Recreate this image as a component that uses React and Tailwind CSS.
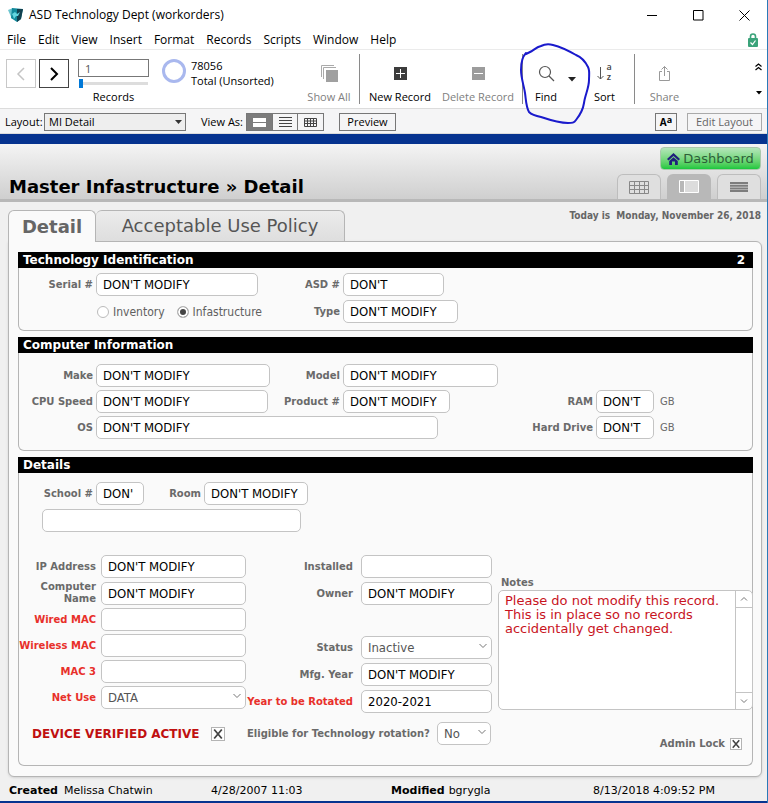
import React from "react";

const input =
  "h-[23px] shrink-0 rounded-[5px] border border-[#c4c4c4] bg-white px-1.5 text-[13px] text-black outline-none font-['DejaVu_Sans_Condensed','DejaVu_Sans',sans-serif]";
const labelGray = "text-right text-[10px] leading-3 font-bold text-[#6a6a6a]";
const labelRed = "text-right text-[10px] leading-3 font-bold whitespace-nowrap text-[#e8302a]";

function Field({ id, label, value = "", width, labelWidth = "w-[74px]", gap = "gap-[3px]", red, unit, span = "" }) {
  return (
    <div className={`flex items-center ${gap} ${span}`}>
      <label htmlFor={id} className={`shrink-0 ${labelWidth} ${red ? labelRed : labelGray}`}>
        {label}
      </label>
      <input id={id} type="text" defaultValue={value} className={`${input} ${width}`} />
      {unit && <span className="ml-[3px] text-[10px] text-[#6a6a6a]">{unit}</span>}
    </div>
  );
}

function Picker({ id, options, width }) {
  return (
    <div className={`relative shrink-0 ${width}`}>
      <select
        id={id}
        className="block h-[23px] w-full appearance-none rounded-[5px] border border-[#c4c4c4] bg-white px-1.5 text-[13px] text-[#555] outline-none font-['DejaVu_Sans_Condensed','DejaVu_Sans',sans-serif]"
      >
        {options.map((o) => (
          <option key={o}>{o}</option>
        ))}
      </select>
      <svg className="pointer-events-none absolute top-1.5 right-1 h-2 w-2.5" viewBox="0 0 10 8" fill="none" stroke="#777">
        <path d="M1.5 2 5 5.5 8.5 2" />
      </svg>
    </div>
  );
}

function CrossBox({ id, size }) {
  return (
    <span className={`relative inline-block shrink-0 ${size}`}>
      <input id={id} type="checkbox" defaultChecked className="peer block h-full w-full appearance-none border border-[#b4b4b4] bg-white" />
      <svg className="pointer-events-none absolute inset-0 hidden h-full w-full peer-checked:block" viewBox="0 0 14 14" stroke="#444" strokeWidth="1.8">
        <path d="M3.2 2.5 10.8 11.5M10.8 2.5 3.2 11.5" />
      </svg>
    </span>
  );
}

function Radio({ id, label, checked }) {
  return (
    <span className="flex items-center gap-1">
      <input
        id={id}
        type="radio"
        name="kind"
        defaultChecked={checked}
        className="h-3 w-3 appearance-none rounded-full border border-[#bbb] bg-white checked:bg-[#444] checked:shadow-[inset_0_0_0_2px_white]"
      />
      <label htmlFor={id} className="text-xs text-[#606060] font-['DejaVu_Sans_Condensed','DejaVu_Sans',sans-serif]">
        {label}
      </label>
    </span>
  );
}

function Section({ title, badge, bodyClass, children }) {
  return (
    <section>
      <h2 className="flex h-4 items-center justify-between bg-black pr-2 pl-[5px] text-xs leading-4 font-bold text-white">
        <span>{title}</span>
        <span>{badge}</span>
      </h2>
      <div className={`rounded-b-md border border-t-0 border-[#b5b5b5] ${bodyClass}`}>{children}</div>
    </section>
  );
}

function Tool({ label, width, disabled, children }) {
  return (
    <button type="button" disabled={disabled} className={`flex h-full shrink-0 flex-col items-center pt-[11px] text-[11px] leading-4 ${width} ${disabled ? "text-[#808080]" : "text-black"}`}>
      <span className="flex h-6 items-center">{children}</span>
      <span className="mt-1 whitespace-nowrap">{label}</span>
    </button>
  );
}

const Divider = () => <div className="mx-[3px] h-[50px] w-px shrink-0 bg-[#8a8a8a]" />;

function TitleBar() {
  return (
    <header className="flex h-[30px] items-center pl-2 text-xs">
      <svg className="h-4 w-4" viewBox="0 0 16 16">
        <path d="M0 3 5 1v10l-1 1z" fill="#6cc5cf" />
        <path d="M4 1 15 2l-2 10-4 3-6-4z" fill="#11899b" />
        <path d="m9 2 6 0-2 10-4 3z" fill="#12404f" />
        <path d="m4 7 3-2 2 2 3-2-2 4-2 0-2 3-1-3z" fill="#63d5df" />
      </svg>
      <span className="ml-[5px]">ASD Technology Dept (workorders)</span>
      <div className="ml-auto flex">
        <button type="button" aria-label="Minimize" className="flex h-7 w-[46px] items-center justify-center">
          <svg width="11" height="11" stroke="#000" fill="none"><path d="M0 5.5h10" /></svg>
        </button>
        <button type="button" aria-label="Maximize" className="flex h-7 w-[46px] items-center justify-center">
          <svg width="11" height="11" stroke="#000" fill="none"><path d="M.5 .5h9.500v9.500h-9.500z" /></svg>
        </button>
        <button type="button" aria-label="Close" className="flex h-7 w-[46px] items-center justify-center">
          <svg width="11" height="11" stroke="#000" fill="none"><path d="m.5 .5 10 10m0-10-10 10" /></svg>
        </button>
      </div>
    </header>
  );
}

function MenuBar() {
  return (
    <nav className="flex h-5 items-center gap-3 border-b border-[#ebebeb] pr-[9px] pl-[7px] text-xs">
      {["File", "Edit", "View", "Insert", "Format", "Records", "Scripts", "Window", "Help"].map((m) => (
        <button key={m} type="button">{m}</button>
      ))}
      <svg className="ml-auto" width="10" height="14" viewBox="0 0 10 14">
        <path d="M2.500 6V3.500a2.500 2.500 0 0 1 5 0V6" fill="none" stroke="#3ba37a" strokeWidth="1.600" />
        <rect y="5" width="10" height="9" rx="1" fill="#3ba37a" />
        <path d="m2.500 9.500 2 2 3-4" fill="none" stroke="#fff" strokeWidth="1.200" />
      </svg>
    </nav>
  );
}

function Toolbar() {
  return (
    <div className="relative flex h-[58px] items-center pl-1.5">
      <div className="flex gap-[3px] self-start pt-[9px]">
        <button type="button" aria-label="Previous record" disabled className="flex h-[29px] w-[30px] items-center justify-center border border-[#c8c8c8]">
          <svg width="10" height="14" fill="none" stroke="#c4c4c4" strokeWidth="1.500"><path d="M8 1 2 7l6 6" /></svg>
        </button>
        <button type="button" aria-label="Next record" className="flex h-[29px] w-[30px] items-center justify-center border border-[#444]">
          <svg width="10" height="14" fill="none" stroke="#000" strokeWidth="2"><path d="m2 1 6 6-6 6" /></svg>
        </button>
      </div>
      <div className="ml-[9px] flex w-[71px] shrink-0 flex-col self-start pt-[9px]">
        <input aria-label="Record number" defaultValue="1" className="h-[18px] w-full border border-[#777] px-1.5 text-[11px] text-[#555] outline-none" />
        <input
          type="range"
          aria-label="Record position"
          defaultValue="0"
          className="mt-0.5 ml-px h-[9px] w-[69px] appearance-none bg-[linear-gradient(#ddd,#ddd)] bg-[length:100%_3px] bg-center bg-no-repeat [&::-webkit-slider-thumb]:h-[9px] [&::-webkit-slider-thumb]:w-1 [&::-webkit-slider-thumb]:appearance-none [&::-webkit-slider-thumb]:bg-[#0078d7]"
        />
        <span className="mt-px text-center text-[11px] leading-4">Records</span>
      </div>
      <div className="mt-[9px] ml-[13px] h-6 w-6 shrink-0 self-start rounded-full border-[3px] border-[#a9b8ee]" />
      <div className="ml-[5px] w-[111px] shrink-0 self-start pt-2 text-[11px] leading-[15px]">
        <div>78056</div>
        <div>Total (Unsorted)</div>
      </div>
      <Tool label="Show All" width="w-[54px]" disabled>
        <svg width="17" height="17" fill="none" stroke="#aaa">
          <path d="M.5 12V.5H13M2.500 14V2.500H15" />
          <path d="M5 5h12v12H5z" fill="#a0a0a0" stroke="none" />
        </svg>
      </Tool>
      <Divider />
      <Tool label="New Record" width="w-[74px]">
        <svg width="13" height="13"><path d="M0 0h13v13H0z" fill="#3c3c3c" /><path d="M6.500 2v9M2 6.500h9" stroke="#fff" /></svg>
      </Tool>
      <Tool label="Delete Record" width="w-[82px]" disabled>
        <svg width="13" height="13"><path d="M0 0h13v13H0z" fill="#9c9c9c" /><path d="M2 6.500h9" stroke="#fff" /></svg>
      </Tool>
      <Divider />
      <Tool label="Find" width="w-10">
        <svg width="17" height="17" fill="none" stroke="#555" strokeWidth="1.200"><circle cx="7" cy="7" r="5.500" /><path d="m11 11 5 5" /></svg>
      </Tool>
      <button type="button" aria-label="Find options" className="flex w-3 justify-center">
        <svg width="8" height="5"><path d="M0 0h8L4 4.500z" fill="#222" /></svg>
      </button>
      <Tool label="Sort" width="w-[53px]">
        <span className="flex items-center gap-0.5">
          <svg width="7" height="16" fill="none" stroke="#555"><path d="M3.500 2v12M.5 11l3 3 3-3" /></svg>
          <span className="flex flex-col pb-0.5 text-[9px] leading-[10px] font-semibold text-[#444]">
            <span>a</span>
            <span>z</span>
          </span>
        </span>
      </Tool>
      <Divider />
      <Tool label="Share" width="w-[53px]" disabled>
        <svg width="13" height="17" fill="none" stroke="#999"><path d="M4 6.500H1.500v9h10v-9H9M6.500 11V1.500M3.500 4.500l3-3 3 3" /></svg>
      </Tool>
      <div className="mr-[5px] ml-auto flex flex-col items-center gap-5">
        <svg width="7" height="8" fill="none" stroke="#000" strokeWidth="1.200"><path d="m.5 3.500 3-2.500 3 2.500M.5 7l3-2.500 3 2.500" /></svg>
        <svg width="6" height="4"><path d="M0 0h6L3 3.500z" /></svg>
      </div>
      <svg className="pointer-events-none absolute -top-2 left-[518px] z-10" width="74" height="84" viewBox="518 42 74 84" fill="none" stroke="#1a1acc" strokeWidth="2" strokeLinecap="round" strokeLinejoin="round">
        <path d="M526 53C522 57 521 64 521 70c0 8 3 16 4 23 1 7 1 14 4 19 3 3 7 4 12 5 9 3 18 6 27 6 4 0 6 0 8-3 4-5 7-10 8-17 1-8 5-15 5-23 0-5 1-9-1-13-3-6-7-10-12-12-7-4-15-8-23-10-4-1-8-1-12 1-4 1-6 3-9 5l-6 3" />
      </svg>
    </div>
  );
}

function LayoutBar() {
  return (
    <div className="flex h-[26px] items-center border-t border-b border-[#dcdcdc] bg-[#f5f5f6] pt-0.5 pr-[5px] pl-[5px] text-[11px]">
      <label htmlFor="layout" className="w-[39px] shrink-0">Layout:</label>
      <div className="relative w-[142px] shrink-0">
        <select id="layout" className="block h-[18px] w-full appearance-none border border-[#777] bg-[#eee] pl-1 leading-4 outline-none">
          <option>MI Detail</option>
        </select>
        <svg className="pointer-events-none absolute top-[7px] right-1" width="7" height="4"><path d="M0 0h7L3.500 4z" fill="#333" /></svg>
      </div>
      <span className="ml-[15px] w-[45px] shrink-0 whitespace-nowrap">View As:</span>
      <div className="flex h-[18px] border border-[#777]">
        <button type="button" aria-label="Form view" className="flex w-[25px] items-center justify-center bg-[#7c7c7c]">
          <svg width="13" height="9" fill="#fff"><path d="M0 0h13v4H0zM0 5h13v4H0z" /></svg>
        </button>
        <button type="button" aria-label="List view" className="flex w-[26px] items-center justify-center border-x border-[#777]">
          <svg width="13" height="10" stroke="#444"><path d="M0 .5h13M0 3.500h13M0 6.500h13M0 9.500h13" /></svg>
        </button>
        <button type="button" aria-label="Table view" className="flex w-[25px] items-center justify-center">
          <svg width="13" height="9" stroke="#444" fill="none"><path d="M.5 .5h12v8H.5zM0 3h13M0 5.500h13M3.500 0v9M6.500 0v9M9.500 0v9" /></svg>
        </button>
      </div>
      <button type="button" className="ml-[15px] h-[18px] w-[57px] border border-[#777] leading-4">Preview</button>
      <button type="button" aria-label="Formatting" className="ml-auto flex h-[18px] w-[22px] items-start justify-center border border-[#777] leading-4 font-bold">
        <span className="text-[10px]">A</span>
        <span className="text-[9px] leading-3">a</span>
      </button>
      <button type="button" className="ml-2.5 h-[18px] w-[75px] border border-[#aaa] leading-4 whitespace-nowrap text-[#666]">Edit Layout</button>
    </div>
  );
}

function PageHeader() {
  const tab = "flex h-[25px] w-[44px] items-center justify-center rounded-t-md";
  return (
    <div className="flex h-[58px] justify-between border-b-[3px] border-[#b8b8b8] bg-linear-to-b from-[#f4f4f4] to-[#cfcfcf] pr-1.5 pl-[9px]">
      <h1 className="self-end text-lg leading-6 font-bold text-black">Master Infastructure » Detail</h1>
      <div className="flex flex-col items-end justify-between pt-[3px]">
        <button type="button" className="flex h-[23px] w-[101px] items-center justify-center gap-[3px] rounded-[4px] border border-[#aac8ac] bg-linear-to-b from-[#b4e6ba] to-[#14c83c] text-[13px] text-[#2c5f38]">
          <svg width="13" height="12" viewBox="0 0 13 12" fill="#20207c">
            <path d="M6.500 0 13 6l-1.500 1.500-5-4.500-5 4.500L0 6z" />
            <path d="M2.200 8 6.500 4.200 10.800 8v4H8V8.500H5V12H2.200z" />
          </svg>
          Dashboard
        </button>
        <div className="flex gap-1.5">
          <button type="button" aria-label="Table" className={`${tab} border border-b-0 border-[#bdbdbd] bg-[#dfdfdf]`}>
            <svg width="20" height="13" fill="none" stroke="#888"><path d="M.5 .5h19v12H.5zM0 4.500h20M0 8.500h20M5.500 0v13M10.500 0v13M15.500 0v13" /></svg>
          </button>
          <button type="button" aria-label="Detail" className={`${tab} bg-[#b8b8b8]`}>
            <svg width="20" height="13" fill="none" stroke="#fff"><path d="M.5 .5h19v12H.5z" /><path d="M6 1h13v11H6z" fill="#dcdcdc" stroke="none" /><path d="M5.500 0v13" /></svg>
          </button>
          <button type="button" aria-label="List" className={`${tab} border border-b-0 border-[#bdbdbd] bg-[#dfdfdf]`}>
            <svg width="18" height="10" fill="none" stroke="#7d7d7d" strokeWidth="2"><path d="M0 1h18M0 3.700h18M0 6.400h18M0 9h18" /></svg>
          </button>
        </div>
      </div>
    </div>
  );
}

function DetailsBody() {
  const left = { labelWidth: "w-[77px]", gap: "gap-[5px]", width: "w-[145px]" };
  const mid = { labelWidth: "w-[107px]", gap: "gap-2", width: "w-[131px]" };
  return (
    <>
      <div className="flex">
        <Field id="school" label="School #" value="DON'" width="w-12" />
        <Field id="room" label="Room" value="DON'T MODIFY" width="w-[104px]" labelWidth="w-[57px]" />
      </div>
      <input aria-label="School name" className={`${input} mt-1 ml-[23px] block w-[259px]`} />

      <div className="mt-[23px] grid grid-cols-[227px_247px_minmax(0,1fr)]">
        <div className="flex flex-col gap-[3px]">
          <Field id="ip" label="IP Address" value="DON'T MODIFY" {...left} />
          <Field id="cname" label="Computer Name" value="DON'T MODIFY" {...left} />
          <Field id="wired" label="Wired MAC" red {...left} />
          <Field id="wireless" label="Wireless MAC" red {...left} />
          <Field id="mac3" label="MAC 3" red {...left} />
          <div className="flex items-center gap-[5px]">
            <label htmlFor="netuse" className={`w-[77px] ${labelRed}`}>Net Use</label>
            <Picker id="netuse" options={["DATA"]} width="w-[145px]" />
          </div>
        </div>
        <div className="flex flex-col gap-1">
          <Field id="installed" label="Installed" {...mid} />
          <Field id="owner" label="Owner" value="DON'T MODIFY" {...mid} />
          <div className="h-[23px]" />
          <div className="flex items-center gap-2">
            <label htmlFor="status" className={`w-[107px] ${labelGray}`}>Status</label>
            <Picker id="status" options={["Inactive"]} width="w-[131px]" />
          </div>
          <Field id="mfg" label="Mfg. Year" value="DON'T MODIFY" {...mid} />
          <Field id="rotate" label="Year to be Rotated" value="2020-2021" red {...mid} />
        </div>
        <div className="-mr-px flex flex-col pt-5 pl-[5px]">
          <label htmlFor="notes" className="pl-[3px] text-[10px] leading-[15px] font-bold text-[#6a6a6a]">Notes</label>
          <div className="flex h-[120px] overflow-hidden rounded-[5px] border border-[#c4c4c4] bg-white">
            <textarea
              id="notes"
              className="min-w-0 flex-1 resize-none overflow-hidden px-1.5 py-[3px] text-[13px] leading-[14px] text-[#c8141e] outline-none"
              defaultValue={"Please do not modify this record.\nThis is in place so no records\naccidentally get changed."}
            />
            <div className="flex w-[17px] flex-col justify-between border-l border-[#c4c4c4]">
              <button type="button" aria-label="Scroll up" className="flex h-[17px] items-center justify-center border-b border-[#c4c4c4]">
                <svg width="8" height="6" fill="none" stroke="#777"><path d="m1 4.500 3-3 3 3" /></svg>
              </button>
              <button type="button" aria-label="Scroll down" className="flex h-[17px] items-center justify-center border-t border-[#c4c4c4]">
                <svg width="8" height="6" fill="none" stroke="#777"><path d="m1 1.500 3 3 3-3" /></svg>
              </button>
            </div>
          </div>
        </div>
      </div>

      <div className="mt-[9px] flex items-start justify-between pr-2.5 pl-[13px]">
        <div className="flex items-center">
          <label htmlFor="verified" className="w-[179px] text-xs leading-4 font-bold whitespace-nowrap text-[#c01010]">DEVICE VERIFIED ACTIVE</label>
          <CrossBox id="verified" size="h-3.5 w-3.5" />
          <label htmlFor="eligible" className="ml-[22px] w-[190px] text-[10px] leading-3 font-bold whitespace-nowrap text-[#6a6a6a]">Eligible for Technology rotation?</label>
          <Picker id="eligible" options={["No"]} width="w-[54px]" />
        </div>
        <div className="flex items-center gap-[5px] pt-4">
          <label htmlFor="lock" className={labelGray}>Admin Lock</label>
          <CrossBox id="lock" size="h-3 w-3" />
        </div>
      </div>
    </>
  );
}

export default function App() {
  return (
    <div className="border-r border-[#2a7ab8] bg-white text-black font-['Open_Sans','Noto_Sans',sans-serif]">
      <TitleBar />
      <MenuBar />
      <Toolbar />
      <LayoutBar />
      <div className="h-2.5 bg-[#06338f]" />
      <main className="border-b-2 border-[#06338f] bg-[#f0f0f0] font-['DejaVu_Sans',Verdana,sans-serif]">
        <PageHeader />
        <div className="pt-2 pr-[5px] pl-2">
          <div className="flex items-start">
            <div role="tablist" className="flex">
              <button role="tab" aria-selected="true" type="button" className="relative z-10 -mb-px h-8 w-[88px] rounded-t-md border border-b-0 border-[#b5b5b5] bg-[#fafafa] text-lg font-bold text-[#666]">Detail</button>
              <button role="tab" aria-selected="false" type="button" className="h-[31px] w-[249px] rounded-t-md border border-b-0 border-l-0 border-[#b5b5b5] bg-linear-to-b from-[#ececec] to-[#dedede] text-lg text-[#555]">Acceptable Use Policy</button>
            </div>
            <p className="mr-px ml-auto text-[10px] leading-3 font-bold whitespace-pre text-[#666] font-['DejaVu_Sans_Condensed','DejaVu_Sans',sans-serif]">Today is  Monday, November 26, 2018</p>
          </div>
          <div className="flex flex-col gap-1.5 rounded-r-md rounded-bl-md border border-[#b5b5b5] bg-[#fafafa] pt-2.5 pr-2 pb-2.5 pl-[9px] shadow-sm">
            <Section title="Technology Identification" badge="2" bodyClass="grid grid-cols-[minmax(0,247fr)_minmax(0,253fr)_minmax(0,233fr)] gap-y-1 pt-[5px] pb-[7px]">
              <Field id="serial" label="Serial #" value="DON'T MODIFY" width="w-[162px]" />
              <Field id="asd" label="ASD #" value="DON'T" width="w-[101px]" span="col-span-2" />
              <div className="flex items-center gap-3 pl-[78px]">
                <Radio id="inventory" label="Inventory" />
                <Radio id="infra" label="Infastructure" checked />
              </div>
              <Field id="type" label="Type" value="DON'T MODIFY" width="w-[115px]" span="col-span-2" />
            </Section>
            <Section title="Computer Information" bodyClass="grid grid-cols-[minmax(0,247fr)_minmax(0,253fr)_minmax(0,233fr)] gap-y-[3px] pt-[11px] pb-[11px]">
              <Field id="make" label="Make" value="DON'T MODIFY" width="w-[174px]" />
              <Field id="model" label="Model" value="DON'T MODIFY" width="w-[155px]" span="col-span-2" />
              <Field id="cpu" label="CPU Speed" value="DON'T MODIFY" width="w-[172px]" />
              <Field id="product" label="Product #" value="DON'T MODIFY" width="w-[107px]" />
              <Field id="ram" label="RAM" value="DON'T" width="w-[58px]" unit="GB" />
              <Field id="os" label="OS" value="DON'T MODIFY" width="w-[342px]" span="col-span-2" />
              <Field id="drive" label="Hard Drive" value="DON'T" width="w-[58px]" unit="GB" />
            </Section>
            <Section title="Details" bodyClass="pt-[9px] pb-[15px]">
              <DetailsBody />
            </Section>
          </div>
        </div>
        <footer className="grid h-6 grid-cols-[202fr_180fr_202fr_174fr] items-center pt-1 pl-[9px] text-[11px]">
          <span><b className="mr-1.5">Created</b>Melissa Chatwin</span>
          <span>4/28/2007 11:03</span>
          <span><b className="mr-1">Modified</b>bgrygla</span>
          <span>8/13/2018 4:09:52 PM</span>
        </footer>
      </main>
    </div>
  );
}
